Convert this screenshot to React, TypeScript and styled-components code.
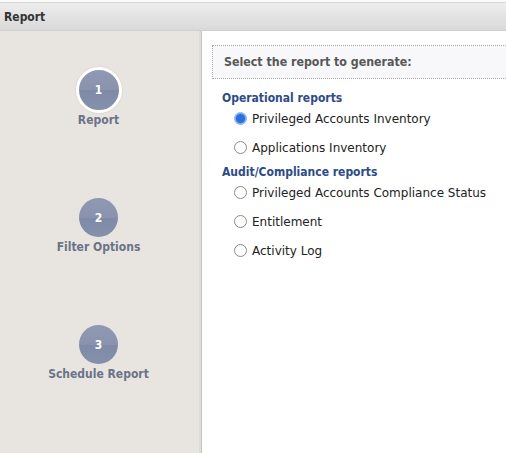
import React from "react";
import styled, { createGlobalStyle } from "styled-components";

const Global = createGlobalStyle`
  html, body { margin: 0; padding: 0; background: #fff; }
  body { font-family: Tahoma, "DejaVu Sans Condensed", "DejaVu Sans", sans-serif; }
  * { box-sizing: border-box; }
`;

const Page = styled.div`
  width: 506px;
  height: 453px;
  display: flex;
  flex-direction: column;
  overflow: hidden;
  background: #fff;
`;

const TopStrip = styled.div`
  height: 3px;
  background: #fafafa;
  border-bottom: 1px solid #d8d8d8;
`;

const TitleBar = styled.div`
  height: 28px;
  display: flex;
  align-items: center;
  padding: 1px 0 0 4px;
  background: linear-gradient(#ededed, #d9d9d9);
  border-bottom: 1px solid #cfcfcf;
  font-weight: bold;
  font-size: 12px;
  color: #333;
`;

const Body = styled.div`
  flex: 1;
  display: flex;
  min-height: 0;
`;

const Sidebar = styled.div`
  width: 202px;
  background: #e8e5e0;
  border-right: 1px solid #c9c7c4;
  box-shadow: inset -2px 0 0 #dedcda;
  display: flex;
  flex-direction: column;
  align-items: center;
  padding-top: 36px;
  gap: 68px;
  padding-right: 4px;
`;

const Step = styled.div`
  display: flex;
  flex-direction: column;
  align-items: center;
`;

const Circle = styled.div<{ $active?: boolean }>`
  width: ${(p) => (p.$active ? 46 : 39)}px;
  height: ${(p) => (p.$active ? 46 : 39)}px;
  margin: ${(p) => (p.$active ? "0" : "3px 0")};
  border-radius: 50%;
  background: linear-gradient(#8f99b4 0%, #8993ae 50%, #7f8aa7 51%, #8590ab 100%);
  border: ${(p) => (p.$active ? "3px solid #ffffff" : "none")};
  box-shadow: ${(p) => (p.$active ? "0 0 2px rgba(0,0,0,0.15)" : "none")};
  color: #fff;
  font-weight: bold;
  font-size: 12px;
  display: flex;
  align-items: center;
  justify-content: center;
`;

const StepLabel = styled.div`
  margin-top: 0;
  font-weight: bold;
  font-size: 12px;
  color: #6b7389;
  white-space: nowrap;
`;

const Main = styled.div`
  flex: 1;
  padding: 14px 0 0 10px;
  background: #fff;
  overflow: hidden;
`;

const Prompt = styled.div`
  height: 34px;
  margin-right: -10px;
  border: 1px dotted #a8a8a8;
  background: #f8f7f9;
  display: flex;
  align-items: center;
  padding-left: 11px;
  font-weight: bold;
  font-size: 12.3px;
  color: #575757;
`;

const Section = styled.div<{ $gap: number }>`
  padding-left: 10px;
  margin-top: ${(p) => p.$gap}px;
`;

const GroupTitle = styled.div`
  font-weight: bold;
  font-size: 12px;
  color: #2e4b86;
  height: 12px;
  line-height: 12px;
`;

const Option = styled.label`
  display: flex;
  align-items: center;
  gap: 5px;
  padding-left: 12px;
  height: 29px;
  font-family: "DejaVu Sans", sans-serif;
  font-size: 12px;
  color: #222;
`;

const Radio = styled.span<{ $checked?: boolean }>`
  width: 13px;
  height: 13px;
  border-radius: 50%;
  flex: none;
  border: 1px solid ${(p) => (p.$checked ? "#7fb0f0" : "#8a8a8a")};
  background: ${(p) =>
    p.$checked ? "radial-gradient(circle, #2f6fdc 0 4px, #4a86e8 4.5px, #a9c9f5 5.5px)" : "#fff"};
`;

const groups = [
  {
    title: "Operational reports",
    gap: 13,
    items: [
      { label: "Privileged Accounts Inventory", checked: true },
      { label: "Applications Inventory" },
    ],
  },
  {
    title: "Audit/Compliance reports",
    gap: 4,
    items: [
      { label: "Privileged Accounts Compliance Status" },
      { label: "Entitlement" },
      { label: "Activity Log" },
    ],
  },
];

const steps = ["Report", "Filter Options", "Schedule Report"];

export default function App() {
  return (
    <Page>
      <Global />
      <TopStrip />
      <TitleBar>Report</TitleBar>
      <Body>
        <Sidebar>
          {steps.map((s, i) => (
            <Step key={s}>
              <Circle $active={i === 0}>{i + 1}</Circle>
              <StepLabel>{s}</StepLabel>
            </Step>
          ))}
        </Sidebar>
        <Main>
          <Prompt>Select the report to generate:</Prompt>
          {groups.map((g) => (
            <Section key={g.title} $gap={g.gap}>
              <GroupTitle>{g.title}</GroupTitle>
              {g.items.map((it) => (
                <Option key={it.label}>
                  <Radio $checked={it.checked} />
                  {it.label}
                </Option>
              ))}
            </Section>
          ))}
        </Main>
      </Body>
    </Page>
  );
}
